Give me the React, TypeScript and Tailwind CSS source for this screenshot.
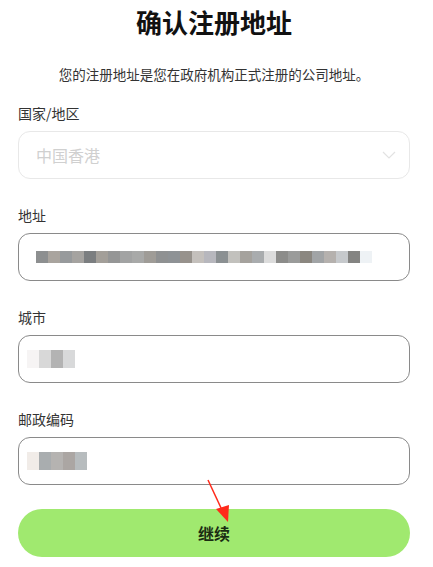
const cjk = { fontFamily: '"Noto Sans CJK SC", "Noto Sans", sans-serif' };

const addressBlocks = [
  "#8d8f90", "#a9a49e", "#979a9c", "#a5a3a0", "#7b7e80", "#a39f99", "#959696",
  "#a2a3a3", "#a8a9a8", "#9f9c97", "#8f9192", "#8e9295", "#97928c", "#c4c0bc",
  "#b7b7bd", "#8b9092", "#c2c1bd", "#a5a29d", "#a9acae", "#dcdcdc", "#8c8c8a",
  "#9a9b9a", "#8b8780", "#a1a4a6", "#b5b1ae", "#c6c9cc", "#848482", "#eef2f5",
];
const cityBlocks = ["#f6f4f4", "#d8d8d8", "#b3b3b3", "#d8d9da"];
const postalBlocks = ["#f1ece8", "#a9adaf", "#b5b3b1", "#aba6a3", "#b7bcbe"];

function Mosaic({ colors, h }: { colors: string[]; h: string }) {
  return (
    <div className="flex">
      {colors.map((c, i) => (
        <span key={i} className={`w-[12px] ${h}`} style={{ backgroundColor: c }} />
      ))}
    </div>
  );
}

function Field({ label, children, muted }: { label: string; children: React.ReactNode; muted?: boolean }) {
  return (
    <div className="flex flex-col">
      <label className="text-[14px] leading-5 text-[#333]">{label}</label>
      <div
        className={`mt-2 flex h-[48px] items-center rounded-[12px] border bg-white pl-[17px] pr-3 ${
          muted ? "border-[#e8e8e8]" : "border-[#8a8a8a]"
        }`}
      >
        {children}
      </div>
    </div>
  );
}

export default function App() {
  return (
    <div className="relative h-[567px] w-[433px] overflow-hidden bg-white px-[18px] pr-[23px]" style={cjk}>
      <h1 className="pt-[5px] text-center text-[26px] font-bold leading-[34px] text-[#111]">确认注册地址</h1>
      <p className="mt-[25px] text-center text-[13.5px] leading-5 text-[#333]">
        您的注册地址是您在政府机构正式注册的公司地址。
      </p>

      <div className="mt-[19px] flex flex-col gap-[26px]">
        <Field label="国家/地区" muted>
          <span className="flex-1 text-[16px] text-[#d0d0d0]">中国香港</span>
          <svg width="14" height="8" viewBox="0 0 14 8" className="mr-[1px]">
            <path d="M1 1l6 6 6-6" fill="none" stroke="#e2e2e2" strokeWidth="1.2" />
          </svg>
        </Field>
        <Field label="地址">
          <Mosaic colors={addressBlocks} h="h-[12px]" />
        </Field>
        <Field label="城市">
          <div className="-ml-[9px]">
            <Mosaic colors={cityBlocks} h="h-[18px]" />
          </div>
        </Field>
        <Field label="邮政编码">
          <div className="-ml-[9px]">
            <Mosaic colors={postalBlocks} h="h-[18px]" />
          </div>
        </Field>
      </div>

      <button className="mt-[24px] flex h-[48px] w-full items-center justify-center rounded-full bg-[#a0e96f] text-[16px] font-semibold text-[#1a2c12]">
        继续
      </button>

      <svg className="pointer-events-none absolute left-0 top-0" width="433" height="567">
        <line x1="208" y1="480" x2="222" y2="510" stroke="#ff2a1a" strokeWidth="1.5" />
        <polygon points="228,522 216,509 229,505" fill="#ff2a1a" />
      </svg>
    </div>
  );
}
